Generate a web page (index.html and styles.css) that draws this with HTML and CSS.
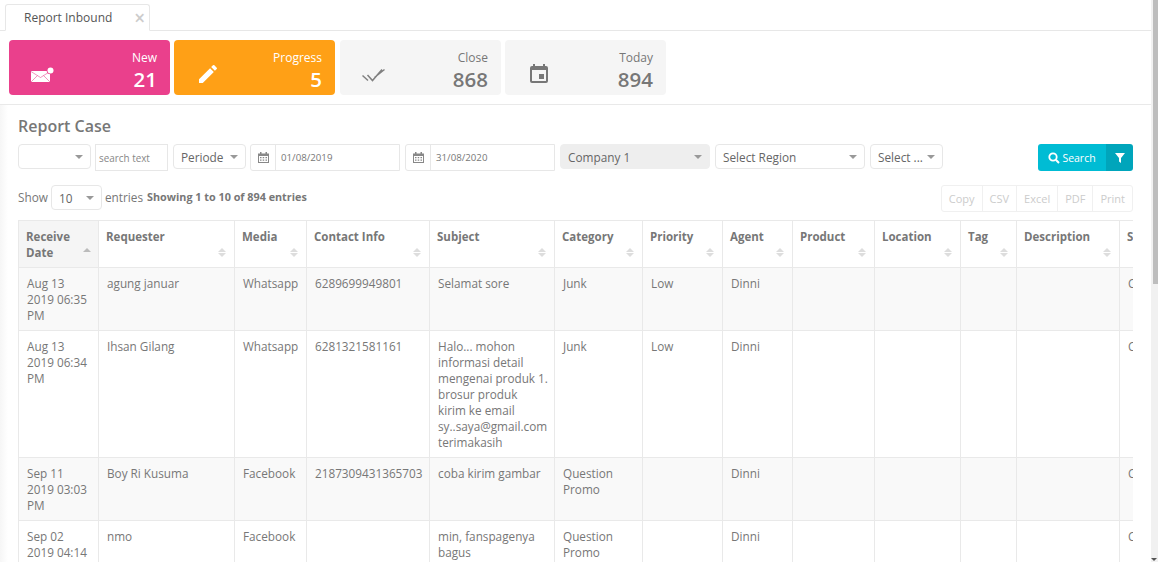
FILE: index.html
```html
<!DOCTYPE html>
<html lang="en">
<head>
    <meta charset="UTF-8">
    <title>Report Inbound</title>
    <link rel="stylesheet" href="styles.css">
</head>
<body>
    <div class="tabbar">
        <div class="tab"><span>Report Inbound</span><span class="tab-close">&times;</span></div>
    </div>
    <div class="stats">
        <div class="stat stat-new">
            <svg class="stat-icon" width="24" height="24" viewBox="0 0 24 24"><rect x="0" y="9" width="19" height="11" fill="#fff"/><path fill="none" stroke="#ea408c" stroke-width=".8" opacity=".7" d="M0 9.500l9.500 6 9.500-6M0 20l6.500-6.500M19 20l-6.500-6.500"/><circle cx="19.500" cy="8.500" r="3.800" fill="#ea408c"/><circle cx="19.500" cy="8.500" r="3" fill="#fff"/></svg>
            <div class="stat-text"><span class="stat-label">New</span><span class="stat-num">21</span></div>
        </div>
        <div class="stat stat-progress">
            <svg class="stat-icon" width="24" height="24" viewBox="0 0 24 24"><path fill="#fff" d="M3 17.250V21h3.750L17.810 9.940l-3.750-3.750L3 17.250zM20.710 7.040a1 1 0 0 0 0-1.410l-2.340-2.340a1 1 0 0 0-1.410 0l-1.830 1.830 3.750 3.750 1.830-1.830z"/></svg>
            <div class="stat-text"><span class="stat-label">Progress</span><span class="stat-num">5</span></div>
        </div>
        <div class="stat stat-grey">
            <svg class="stat-icon" width="24" height="24" viewBox="0 0 24 24"><path fill="none" stroke="#808080" stroke-width="1.500" d="M.5 13.500l5.500 5M5.500 13l5 5.500L20 7.500M12.500 15.500L22.500 7.500"/></svg>
            <div class="stat-text"><span class="stat-label">Close</span><span class="stat-num">868</span></div>
        </div>
        <div class="stat stat-grey">
            <svg class="stat-icon" width="24" height="24" viewBox="0 0 24 24"><path fill="#777" d="M17 12h-5v5h5v-5zM16 2v2H8V2H6v2H5a2 2 0 0 0-2 2v13a2 2 0 0 0 2 2h14a2 2 0 0 0 2-2V6a2 2 0 0 0-2-2h-1V2h-2zm3 17H5V8h14v11z"/></svg>
            <div class="stat-text"><span class="stat-label">Today</span><span class="stat-num">894</span></div>
        </div>
    </div>
    <div class="content">
        <h1 class="title">Report Case</h1>
        <div class="filters">
            <div class="select sel-blank"></div>
            <div class="search-text">search text</div>
            <div class="select sel-periode">Periode</div>
            <div class="date-group date-from">
                <span class="date-addon"><svg width="11" height="11" viewBox="0 0 11 11"><path fill="#888" d="M2 0h1.500v1.500h4V0H9v1.500h2V11H0V1.500h2zM1 4v6h9V4z"/><path fill="#888" d="M2 5h1.500v1.200H2zM4.700 5h1.500v1.200H4.700zM7.500 5H9v1.200H7.500zM2 7.500h1.500v1.200H2zM4.700 7.500h1.500v1.200H4.700zM7.500 7.500H9v1.200H7.500z"/></svg></span>
                <span class="date-value">01/08/2019</span>
            </div>
            <div class="date-group">
                <span class="date-addon"><svg width="11" height="11" viewBox="0 0 11 11"><path fill="#888" d="M2 0h1.500v1.500h4V0H9v1.500h2V11H0V1.500h2zM1 4v6h9V4z"/><path fill="#888" d="M2 5h1.500v1.200H2zM4.700 5h1.500v1.200H4.700zM7.500 5H9v1.200H7.500zM2 7.500h1.500v1.200H2zM4.700 7.500h1.500v1.200H4.700zM7.500 7.500H9v1.200H7.500z"/></svg></span>
                <span class="date-value">31/08/2020</span>
            </div>
            <div class="select sel-company">Company 1</div>
            <div class="select sel-region">Select Region</div>
            <div class="select sel-more">Select ...</div>
            <div class="search-group">
                <div class="search-btn"><svg width="12" height="12" viewBox="0 0 12 12"><circle cx="5" cy="5" r="3.700" fill="none" stroke="#fff" stroke-width="1.800"/><path stroke="#fff" stroke-width="2" d="M7.800 7.800L11 11"/></svg>Search</div>
                <div class="filter-btn"><svg width="10" height="10" viewBox="0 0 10 10"><path fill="#fff" d="M0 0h10L6 5v5L4 8.500V5z"/></svg></div>
            </div>
        </div>
        <div class="table-tools">
            <div class="length">
                <span>Show</span>
                <div class="select sel-length">10</div>
                <span>entries</span>
                <strong>Showing 1 to 10 of 894 entries</strong>
            </div>
            <div class="export">
                <span>Copy</span><span>CSV</span><span>Excel</span><span>PDF</span><span>Print</span>
            </div>
        </div>
        <div class="table-wrap">
            <table class="report">
                <colgroup>
                    <col class="c1"><col class="c2"><col class="c3"><col class="c4"><col class="c5"><col class="c6"><col class="c7"><col class="c8"><col class="c9"><col class="c10"><col class="c11"><col class="c12"><col class="c13">
                </colgroup>
                <thead>
                    <tr>
                        <th class="sorted">Receive Date</th>
                        <th>Requester</th>
                        <th>Media</th>
                        <th>Contact Info</th>
                        <th>Subject</th>
                        <th>Category</th>
                        <th>Priority</th>
                        <th>Agent</th>
                        <th>Product</th>
                        <th>Location</th>
                        <th>Tag</th>
                        <th>Description</th>
                        <th>Status</th>
                    </tr>
                </thead>
                <tbody>
                    <tr class="odd">
                        <td>Aug 13 2019 06:35 PM</td><td>agung januar</td><td>Whatsapp</td><td>6289699949801</td><td>Selamat sore</td><td>Junk</td><td>Low</td><td>Dinni</td><td></td><td></td><td></td><td></td><td>Closed</td>
                    </tr>
                    <tr>
                        <td>Aug 13 2019 06:34 PM</td><td>Ihsan Gilang</td><td>Whatsapp</td><td>6281321581161</td><td>Halo... mohon informasi detail mengenai produk 1. brosur produk<br>kirim ke email sy..saya@gmail.com terimakasih</td><td>Junk</td><td>Low</td><td>Dinni</td><td></td><td></td><td></td><td></td><td>Closed</td>
                    </tr>
                    <tr class="odd">
                        <td>Sep 11 2019 03:03 PM</td><td>Boy Ri Kusuma</td><td>Facebook</td><td>2187309431365703</td><td>coba kirim gambar</td><td>Question Promo</td><td></td><td>Dinni</td><td></td><td></td><td></td><td></td><td>Closed</td>
                    </tr>
                    <tr>
                        <td>Sep 02 2019 04:14 PM</td><td>nmo</td><td>Facebook</td><td></td><td>min, fanspagenya bagus</td><td>Question Promo</td><td></td><td>Dinni</td><td></td><td></td><td></td><td></td><td>Closed</td>
                    </tr>
                </tbody>
            </table>
        </div>
    </div>
    <div class="scrollbar"><div class="scroll-thumb"></div></div>
</body>
</html>
```

FILE: styles.css
```css
html, body {
    height: 562px;
    overflow: hidden;
}
body {
    margin: 0;
    background: #fff;
    font-family: "Open Sans", sans-serif;
    font-size: 12px;
    color: #777;
    position: relative;
}
.tabbar {
    height: 26px;
    border-bottom: 1px solid #e7e7e7;
    padding: 4px 0 0 5px;
}
.tab {
    width: 145px;
    height: 27px;
    box-sizing: border-box;
    border: 1px solid #e7e7e7;
    border-bottom: 1px solid #fff;
    border-radius: 3px 3px 0 0;
    background: #fff;
    padding-left: 18px;
    line-height: 26px;
    font-size: 12px;
    color: #555;
    display: flex;
    justify-content: space-between;
}
.tab-close {
    color: #ccc;
    font-size: 19px;
    font-weight: 600;
    padding-right: 4px;
}
.stats {
    display: flex;
    gap: 4px;
    padding: 9px 0 9px 9px;
    border-bottom: 1px solid #e9e9e9;
}
.stat {
    width: 161px;
    height: 55px;
    box-sizing: border-box;
    border-radius: 4px;
    display: flex;
    justify-content: space-between;
    align-items: flex-end;
    padding: 0 13px 2px 22px;
}
.stat:nth-child(3) {
    margin-left: 1px;
}
.stat-new { background: #ea408c; color: #fff; }
.stat-progress { background: #ffa016; color: #fff; }
.stat-grey { background: #f5f5f5; color: #777; }
.stat-icon {
    margin-bottom: 7px;
}
.stat-text {
    display: flex;
    flex-direction: column;
    align-items: flex-end;
}
.stat-label {
    font-size: 12px;
    line-height: 17px;
}
.stat-num {
    font-size: 20.500px;
    font-weight: 600;
    line-height: 27px;
}
.content {
    padding: 0 25px 0 18px;
    background: linear-gradient(90deg, #f6f6f6, #fff 8px);
    height: 457px;
}
.title {
    margin: 0 0 8px;
    padding-top: 11px;
    font-size: 16px;
    font-weight: 600;
    line-height: 20px;
    color: #777;
}
.filters {
    display: flex;
    align-items: flex-start;
    gap: 5px;
    height: 27px;
}
.select {
    height: 25px;
    box-sizing: border-box;
    border: 1px solid #e7e7e7;
    border-radius: 4px;
    line-height: 25px;
    padding-left: 7px;
    font-size: 11.800px;
    color: #666;
    position: relative;
    background: #fff;
}
.select::after {
    content: "";
    position: absolute;
    right: 7px;
    top: 10px;
    border: 4px solid transparent;
    border-top-color: #999;
    border-bottom: 0;
}
.sel-blank { width: 73px; }
.sel-periode { width: 73px; }
.sel-company { width: 150px; background: #eee; border-color: #eee; }
.sel-region { width: 150px; }
.sel-more { width: 73px; }
.search-text {
    width: 73px;
    height: 27px;
    margin-left: -1px;
    box-sizing: border-box;
    border: 1px solid #e7e7e7;
    line-height: 27px;
    padding-left: 3px;
    font-size: 9.900px;
    color: #888;
}
.date-group {
    width: 150px;
    height: 27px;
    box-sizing: border-box;
    border: 1px solid #e7e7e7;
    border-radius: 3px 0 0 3px;
    display: flex;
    font-size: 9.700px;
    color: #777;
}
.date-from {
    margin-left: -1px;
}
.date-addon {
    width: 24px;
    border-right: 1px solid #e7e7e7;
    display: flex;
    align-items: center;
    justify-content: center;
}
.date-value {
    padding-left: 5px;
    line-height: 25px;
}
.search-group {
    margin-left: auto;
    display: flex;
    height: 27px;
    border-radius: 3px;
    overflow: hidden;
    color: #fff;
}
.search-btn {
    width: 68px;
    background: #00bcd4;
    font-size: 10.500px;
    font-weight: 500;
    display: flex;
    align-items: center;
    justify-content: center;
    gap: 2px;
}
.filter-btn {
    width: 27px;
    background: #00a5bb;
    display: flex;
    align-items: center;
    justify-content: center;
}
.table-tools {
    display: flex;
    justify-content: space-between;
    align-items: flex-start;
    margin-top: 14px;
    height: 35px;
}
.length {
    display: flex;
    align-items: flex-start;
    gap: 3px;
    height: 25px;
    font-size: 11.800px;
    line-height: 24px;
}
.length strong {
    font-size: 10.800px;
    font-weight: 700;
    margin-left: 1px;
}
.sel-length {
    width: 51px;
    height: 25px;
}
.export {
    display: flex;
    height: 27px;
    border: 1px solid #f0f0f0;
    border-radius: 3px;
    box-sizing: border-box;
    font-size: 11px;
    color: #ccc;
}
.export span {
    padding: 0 7px;
    line-height: 25px;
    border-left: 1px solid #f0f0f0;
}
.export span:first-child {
    border-left: 0;
}
.table-wrap {
    overflow: hidden;
    width: 1115px;
}
.report {
    border-collapse: collapse;
    table-layout: fixed;
    width: 1180px;
    font-size: 11.750px;
    line-height: 16px;
}
.c1 { width: 80px; }
.c2 { width: 136px; }
.c3 { width: 72px; }
.c4 { width: 123px; }
.c5 { width: 125px; }
.c6 { width: 88px; }
.c7 { width: 80px; }
.c8 { width: 70px; }
.c9 { width: 82px; }
.c10 { width: 86px; }
.c11 { width: 56px; }
.c12 { width: 103px; }
.c13 { width: 79px; }
.report th, .report td {
    border: 1px solid #e9e9e9;
    text-align: left;
    vertical-align: top;
    overflow: hidden;
}
.report td {
    padding: 7px 5px 7px 8px;
}
.report th {
    padding: 8px 8px 6px 7px;
    font-weight: 700;
    font-size: 11.500px;
    color: #777;
    position: relative;
}
.report th::before {
    content: "";
    position: absolute;
    right: 8px;
    top: 27px;
    border: 4px solid transparent;
    border-bottom: 4px solid #ddd;
    border-top: 0;
}
.report th::after {
    content: "";
    position: absolute;
    right: 8px;
    top: 32px;
    border: 4px solid transparent;
    border-top: 4px solid #ddd;
    border-bottom: 0;
}
.report th.sorted {
    background: #f5f5f5;
}
.report th.sorted::before {
    right: 7px;
    border-bottom-color: #bbb;
}
.report th.sorted::after {
    display: none;
}
.report tr.odd td {
    background: #f9f9f9;
}
.scrollbar {
    position: absolute;
    right: 0;
    top: 0;
    bottom: 0;
    width: 7px;
    background: #f1f1f1;
}
.scrollbar::after {
    content: "";
    position: absolute;
    right: 1px;
    bottom: 1px;
    border: 3px solid transparent;
    border-top: 3px solid #555;
    border-bottom: 0;
}
.scroll-thumb {
    margin-left: 2px;
    height: 284px;
    background: #bdbdbd;
}
```
